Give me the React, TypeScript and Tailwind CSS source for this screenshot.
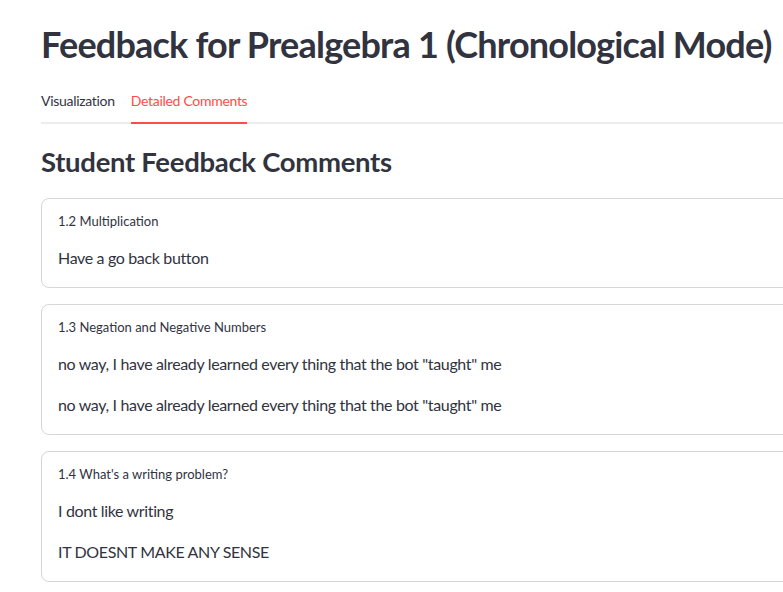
import React from "react";

const cards = [
  { label: "1.2 Multiplication", items: ["Have a go back button"] },
  {
    label: "1.3 Negation and Negative Numbers",
    items: [
      'no way, I have already learned every thing that the bot "taught" me',
      'no way, I have already learned every thing that the bot "taught" me',
    ],
  },
  {
    label: "1.4 What's a writing problem?",
    items: ["I dont like writing", "IT DOESNT MAKE ANY SENSE"],
  },
];

export default function App() {
  return (
    <div
      className="w-[783px] h-[592px] overflow-hidden bg-white text-[#31333f]"
      style={{ fontFamily: '"Lato", "Noto Sans", sans-serif' }}
    >
      <div className="w-[820px] pl-[41px] pt-[22px]">
        <h1 className="whitespace-nowrap text-[36px] leading-[44px] font-bold tracking-[-0.8px]">
          Feedback for Prealgebra 1 (Chronological Mode)
        </h1>
        <div className="mt-[25px] flex border-b-2 border-[#ececec] text-[14px] tracking-[-0.3px]">
          <div className="pb-[11px] pr-[16px] leading-[20px]">Visualization</div>
          <div className="pb-[11px] leading-[20px] text-[#ff4b4b] border-b-2 border-[#ff4b4b] -mb-[2px]">
            Detailed Comments
          </div>
        </div>
        <h2 className="mt-[20px] whitespace-nowrap text-[27.5px] leading-[36px] font-bold tracking-[-0.3px]">
          Student Feedback Comments
        </h2>
        <div className="mt-[18px] flex flex-col gap-[16px]">
          {cards.map((c) => (
            <div
              key={c.label}
              className="border border-[#d6d6d9] rounded-lg px-4 pt-[12px] pb-4"
            >
              <div className="text-[13px] leading-[20px]">{c.label}</div>
              <div className="mt-[14px] flex flex-col gap-4">
                {c.items.map((t, i) => (
                  <p key={i} className="text-[16px] leading-[25.6px] tracking-[-0.35px]">
                    {t}
                  </p>
                ))}
              </div>
            </div>
          ))}
        </div>
      </div>
    </div>
  );
}
